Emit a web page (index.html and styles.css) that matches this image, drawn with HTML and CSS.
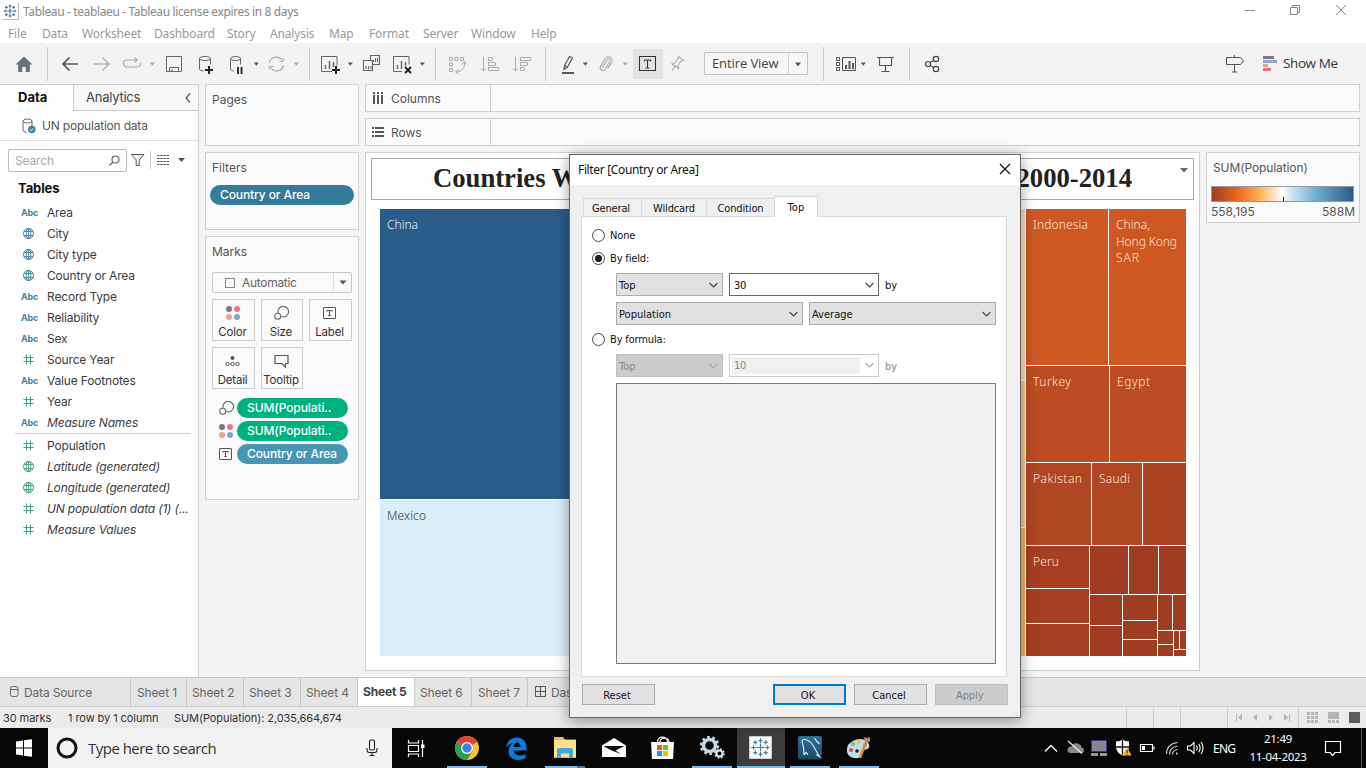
FILE: index.html
```html
<!DOCTYPE html>
<html lang="en">
<head>
<meta charset="utf-8">
<title>Tableau - teablaeu</title>
<link rel="stylesheet" href="styles.css">
</head>
<body>
<svg class="defs" width="0" height="0">
  <defs>
    <g id="globe" fill="none" stroke="currentColor"><circle cx="5.5" cy="5.5" r="5"/><ellipse cx="5.5" cy="5.5" rx="2.3" ry="5"/><path d="M5.5 0v11M1 3.5h9M1 7.5h9" stroke-width=".9"/></g>
    <g id="hash" fill="none" stroke="currentColor"><path d="M3.5 .5v10M7.5 .5v10M.5 3.5h10M.5 7.5h10"/></g>
    <g id="size" fill="none" stroke="#666" stroke-width="1.1"><path d="M4.2 7.2A5.3 5.3 0 1 1 7.3 10.6"/><circle cx="3.7" cy="10.3" r="3"/></g>
    <g id="dots"><circle cx="3" cy="3" r="3" fill="#85708f"/><circle cx="11" cy="3" r="3" fill="#ef7384"/><circle cx="3" cy="11" r="3" fill="#eda583"/><circle cx="11" cy="11" r="3" fill="#86a3c8"/></g>
    <g id="tbox" fill="none" stroke="#555"><rect x=".5" y=".5" width="12" height="11" rx=".5"/><path d="M4 4.500v-1h5v1M6.500 3.500v5M5.200 8.500h2.600" stroke-width="1.1"/></g>
    <g id="spark" stroke="#477f9c" fill="none"><path d="M0-3.500v7M-3.500 0h7M0-8v4M-1.700-6h3.400M0 4v4M-1.700 6h3.400M-8 0h4M-6-1.700v3.400M4 0h4M6-1.700v3.400M-4.500-6.300v3.600M-6.300-4.500h3.600M4.500-6.300v3.600M2.700-4.500h3.600M-4.500 2.700v3.600M-6.300 4.500h3.600M4.500 2.700v3.600M2.700 4.500h3.600"/></g>
    <path id="caret" d="M.3 0h5L2.800 3.200z"/>
    <linearGradient id="board" x1="0" y1="0" x2="0" y2="1"><stop stop-color="#2f7099"/><stop offset="1" stop-color="#1d4868"/></linearGradient>
  </defs>
</svg>

<header class="titlebar">
  <svg class="app" width="16" height="17" viewBox="0 0 16 17"><path d="M0 16.500h15.500V0" fill="none" stroke="#bbb"/><use href="#spark" transform="translate(7 8) scale(.8)" stroke-width="1.500"/></svg>
  <span class="title">Tableau - teablaeu - Tableau license expires in 8 days</span>
  <svg class="wincontrols" width="110" height="23" viewBox="1240 0 110 23" fill="none" stroke="#888"><path d="M1245 10.500h10M1290.500 7.500h7v7h-7zM1292.500 7.500v-2h7v7h-2M1336 5l10 10M1346 5l-10 10"/></svg>
</header>
<nav class="menubar">
  <span class="m1">File</span><span class="m2">Data</span><span class="m3">Worksheet</span><span class="m4">Dashboard</span><span class="m5">Story</span><span class="m6">Analysis</span><span class="m7">Map</span><span class="m8">Format</span><span class="m9">Server</span><span class="m10">Window</span><span class="m11">Help</span>
</nav>

<div class="toolbar">
  <svg width="704" height="41" viewBox="0 43 704 41" fill="none" stroke="#666">
    <path d="M24 56.500l-8.500 8h2.700v7.500h4v-5h3.600v5h4v-7.500h2.700z" fill="#667282" stroke="none"/>
    <path d="M47.500 47v34M309.500 47v34M435.500 47v34M545.500 47v34" stroke="#ccc"/>
    <path d="M63 64h15M69.500 57.500L63 64l6.500 6.500" stroke="#555" stroke-width="1.700"/>
    <path d="M94 64h15M102.500 57.500L109 64l-6.500 6.500" stroke="#b4b4b4" stroke-width="1.500"/>
    <path d="M133 67h-6a3.500 3.500 0 0 1 0-7h10M134.500 57.500l2.700 2.500-2.700 2.500M137 67a3.500 3.500 0 0 0 3.500-4.500M133 67h4" stroke="#aaa" stroke-width="1.200"/>
    <path d="M166.500 56.500h15v15h-15zM169.500 71.500v-4h9v4M172 69v2.500"/>
    <ellipse cx="205" cy="58.500" rx="5.500" ry="2"/><path d="M199.500 58.500v10.500c0 1.200 2 1.800 4 2M210.500 58.500v6"/>
    <path d="M209 66v8M205 70h8" stroke="#222" stroke-width="2"/>
    <ellipse cx="235.500" cy="58.500" rx="5" ry="2"/><path d="M230.500 58.500v10.500c0 1 1.500 1.800 3.500 2M240.500 58.500v6"/>
    <path d="M238 67v7M241.500 67v7" stroke="#222" stroke-width="1.800"/>
    <path d="M269.500 62.500a7 7 0 0 1 12.500-2.500M283.500 65.500a7 7 0 0 1-12.500 2.500M279.500 61.500l3 0 1.500-3M273.500 66.500l-3.500 0-1 3" stroke="#aaa" stroke-width="1.200"/>
    <path d="M332 71.500h-10.500v-15h15.500v9" /><path d="M325.500 69v-4M329.500 69v-8M333.500 67v-5" stroke-width="1.500"/><path d="M336 66v8M332 70h8" stroke="#222" stroke-width="2"/>
    <path d="M370.500 60.500v-5h9v9h-7M363.500 60.500h9v10h-9zM366 69v-3M368.500 69v-3M371 69v-3M373.500 62v-2M375.500 62v-4M377.500 62v-4" stroke-width="1.100"/>
    <path d="M402 71.500h-8.500v-15h15.500v8"/><path d="M397.500 69v-4M401.500 69v-8M405.500 66v-4" stroke-width="1.500"/><path d="M405 67l6 6M411 67l-6 6" stroke="#222" stroke-width="2"/>
    <g stroke="#aaa"><path d="M449.500 57.500h3v3h-3zM455 57.500h3v3h-3zM460.500 57.500h3v3h-3zM449.500 63h3v3h-3zM449.500 68.500h3v3h-3zM464.500 62v2q0 7-8 8M461.500 64.500l3-3 2.500 3M458.500 69.500l-3 2.500 3 2"/>
    <path d="M483.500 57v14M481 68.500l2.500 2.500 2.500-2.500M488.500 57.500h4v3h-4zM488.500 62.500h7v3h-7zM488.500 67.500h10v3h-10z"/>
    <path d="M515.500 57v14M513 68.500l2.500 2.500 2.500-2.500M520.500 57.500h10v3h-10zM520.500 62.500h7v3h-7zM520.500 67.500h4v3h-4z"/></g>
    <path d="M562 73h12" stroke="#555" stroke-width="2"/><path d="M564.500 65.500l5-9 3 1.500-5 9-3.500 2.500zM564.500 65.500l3 1.500" stroke="#555" stroke-width="1.200"/>
    <path d="M602.500 67.500l5-8a1.500 1.500 0 0 1 2.500 1.700l-5 8a2.600 2.600 0 0 1-4.500-2.800l5-8a3.600 3.600 0 0 1 6 4.200l-4 6" stroke="#aaa" stroke-width="1.100"/>
    <path d="M633 49h30v30h-30z" fill="#e3e3e3" stroke="none"/><path d="M639.500 56.500h16v14h-16zM644.500 61.500v-1.500h6v1.500M647.500 60v8M645.500 68h4" stroke="#333" stroke-width="1.100"/>
    <path d="M678.500 56.500l5 4-3 1-2.500 4 .5 3-3-2.500-3.500 4.500M671.500 63.500l4 3M671.500 63.500l3.500-.5 2.500-3.500 1-3" stroke="#aaa" stroke-width="1.100"/>
    <g fill="#555" stroke="none"><use href="#caret" x="253.500" y="62.500"/><use href="#caret" x="347.500" y="62.500"/><use href="#caret" x="419.500" y="62.500"/><use href="#caret" x="582.500" y="62.500"/></g>
    <g fill="#aaa" stroke="none"><use href="#caret" x="149.500" y="62.500"/><use href="#caret" x="293.500" y="62.500"/><use href="#caret" x="622.500" y="62.500"/></g>
  </svg>
  <div class="viewsize"><span>Entire View</span><svg width="18" height="22"><path d="M6 9.500h6l-3 4z" fill="#555"/></svg></div>
  <svg width="475" height="41" viewBox="808 43 475 41" fill="none" stroke="#555">
    <path d="M823.500 47v34M909.500 47v34" stroke="#ccc"/>
    <path d="M836.500 57.500h3v3h-3zM836.500 62.500h3v3h-3zM836.500 67.500h3v3h-3zM842.500 57.500h13v13h-13z"/><path d="M846 69v-4M849.500 69v-8M853 69v-6" stroke-width="2"/>
    <use href="#caret" x="860.500" y="62.500" fill="#555" stroke="none"/>
    <path d="M877 57.500h17M879.500 57.500v8h12v-8M885.500 65.500v5.500M881.500 71.500h8" stroke-width="1.200"/>
    <g stroke="#444" stroke-width="1.200"><circle cx="928" cy="64" r="2.500"/><circle cx="936" cy="59" r="2.700"/><circle cx="936" cy="69" r="2.700"/><path d="M930.500 62.500l3-2M930.500 65.500l3 2"/></g>
    <path d="M1226.500 57.500h14l3 3.500-3 3.500h-14zM1234.500 55v2M1234.500 64.500v7.500M1232 72h5"/>
    <g stroke="none"><path d="M1263 56h11v3h-11z" fill="#85708f"/><path d="M1263 60h14v3h-14z" fill="#8aa9cd"/><path d="M1263 64h5v3h-5z" fill="#eda583"/><path d="M1263 68h8v3h-8z" fill="#e5737e"/></g>
  </svg>
  <span class="showme">Show Me</span>
</div>

<main class="workspace">
  <aside class="datapane">
    <div class="panetabs">
      <b class="ptab on">Data</b>
      <div class="ptab off"><span>Analytics</span><svg width="8" height="12"><path d="M6 1.500L2 6l4 4.500" fill="none" stroke="#555" stroke-width="1.200"/></svg></div>
    </div>
    <div class="source"><svg width="14" height="16" fill="none" stroke="#666"><ellipse cx="5.500" cy="3" rx="4.500" ry="2"/><path d="M1 3v9c0 1.500 1.500 2 3.500 2.300M10 3v5"/><circle cx="9.800" cy="11.500" r="3.800" fill="#4484a0" stroke="none"/><path d="M8 11.500l1.200 1.200 2-2.200" stroke="#fff"/></svg><span>UN population data</span></div>
    <div class="searchrow">
      <div class="search"><span>Search</span><svg width="11" height="11" fill="none" stroke="#666" stroke-width="1.200"><circle cx="6.500" cy="4.500" r="3.500"/><path d="M4 7L.5 10.500"/></svg></div>
      <svg class="tools" width="60" height="18" viewBox="130 151 60 18"><path d="M131.500 154.500h12.500l-4.800 5.500v5.500h-3v-5.500z" fill="none" stroke="#555"/><path d="M150.500 151v18" stroke="#ccc"/><path d="M157 155.500h12M157 158.500h12M157 161.500h12M157 164.500h12" stroke="#555" stroke-dasharray="2.500 .7"/><path d="M178 158h7l-3.500 4z" fill="#555"/></svg>
    </div>
    <h2>Tables</h2>
    <ul class="fields dims">
      <li><i class="abc">Abc</i>Area</li>
      <li><svg><use href="#globe"/></svg>City</li>
      <li><svg><use href="#globe"/></svg>City type</li>
      <li><svg><use href="#globe"/></svg>Country or Area</li>
      <li><i class="abc">Abc</i>Record Type</li>
      <li><i class="abc">Abc</i>Reliability</li>
      <li><i class="abc">Abc</i>Sex</li>
      <li><svg class="green"><use href="#hash"/></svg>Source Year</li>
      <li><i class="abc">Abc</i>Value Footnotes</li>
      <li><svg class="green"><use href="#hash"/></svg>Year</li>
      <li class="it"><i class="abc">Abc</i>Measure Names</li>
    </ul>
    <ul class="fields measures">
      <li><svg class="green"><use href="#hash"/></svg>Population</li>
      <li class="it"><svg class="green"><use href="#globe"/></svg>Latitude (generated)</li>
      <li class="it"><svg class="green"><use href="#globe"/></svg>Longitude (generated)</li>
      <li class="it"><svg class="green"><use href="#hash"/></svg>UN population data (1) (...</li>
      <li class="it"><svg class="green"><use href="#hash"/></svg>Measure Values</li>
    </ul>
  </aside>

  <section class="cards">
    <div class="card pages"><h3>Pages</h3></div>
    <div class="card filters"><h3>Filters</h3><div class="pill teal">Country or Area</div></div>
    <div class="card marks">
      <h3>Marks</h3>
      <div class="marktype"><svg width="10" height="10"><rect x=".5" y=".5" width="9" height="9" fill="none" stroke="#888"/></svg><span>Automatic</span><svg class="drop" width="18" height="19"><path d="M5.500 7.500h7L9 11.500z" fill="#555"/></svg></div>
      <div class="markgrid">
        <div><svg width="14" height="14"><use href="#dots"/></svg>Color</div>
        <div><svg width="15" height="14"><use href="#size"/></svg>Size</div>
        <div><svg width="13" height="14"><use href="#tbox" y="1"/></svg>Label</div>
        <div><svg width="15" height="14" fill="none" stroke="#555"><circle cx="7.500" cy="4" r="2" fill="#555" stroke="none"/><circle cx="2.500" cy="10" r="1.700"/><circle cx="7.500" cy="10" r="1.700"/><circle cx="12.500" cy="10" r="1.700"/></svg>Detail</div>
        <div><svg width="15" height="14"><path d="M1 1.500h13v8h-2.500v3.500l-3.500-3.500h-7z" fill="none" stroke="#555" stroke-width="1.200"/></svg>Tooltip</div>
      </div>
      <div class="encodings">
        <div><svg width="15" height="14"><use href="#size"/></svg><span class="pill green">SUM(Populati..</span></div>
        <div><svg width="15" height="14"><use href="#dots"/></svg><span class="pill green">SUM(Populati..</span></div>
        <div><svg width="15" height="14"><use href="#tbox" y="1"/></svg><span class="pill blue">Country or Area</span></div>
      </div>
    </div>
  </section>

  <section class="canvas">
    <div class="shelf"><div class="label"><svg width="13" height="13" fill="#555"><path d="M1 0h2v2h-2zM5 0h2v2h-2zM9 0h2v2h-2zM1 3h2v9h-2zM5 3h2v9h-2zM9 3h2v9h-2z"/></svg>Columns</div></div>
    <div class="shelf"><div class="label"><svg width="13" height="13" fill="#555"><path d="M0 1h2v2h-2zM0 5h2v2h-2zM0 9h2v2h-2zM3 1h9v2h-9zM3 5h9v2h-9zM3 9h9v2h-9z"/></svg>Rows</div></div>
    <div class="lower">
      <div class="viz">
        <div class="viztitle"><span>Countries W</span><span>2000-2014</span><svg width="9" height="5"><path d="M0 0h8L4 4.500z" fill="#666"/></svg></div>
        <svg class="treemap" width="806" height="447" viewBox="380 209 806 447">
          <path d="M380 209h420v290h-420z" fill="#2a5b89"/><path d="M380 500h420v156h-420z" fill="#daeefa"/>
          <path d="M1000 209h25v171h-25z" fill="#f8e2cb"/><path d="M1000 381h25v146h-25z" fill="#f8cd92"/><path d="M1000 528h25v128h-25z" fill="#fbb45c"/>
          <path d="M1026 209h82v156h-82zM1109 209h77v156h-77z" fill="#cf5822"/>
          <path d="M1026 366h83v96h-83zM1110 366h76v96h-76z" fill="#bc4c22"/>
          <path d="M1026 463h65v82h-65zM1092 463h50v82h-50z" fill="#b04622"/><path d="M1143 463h43v82h-43z" fill="#ab4322"/>
          <path d="M1026 546h63v42h-63zM1026 589h63v34h-63zM1026 624h63v32h-63z" fill="#a53f22"/>
          <path d="M1090 546h38v48h-38zM1129 546h29v48h-29zM1159 546h27v48h-27zM1090 595h32v30h-32zM1090 626h32v30h-32zM1123 595h34v25h-34zM1123 621h34v18h-34zM1123 640h34v16h-34zM1158 595h14v35h-14zM1173 595h13v35h-13zM1158 631h15v13h-15zM1158 645h15v11h-15zM1174 631h5v18h-5zM1180 631h6v18h-6zM1174 650h12v6h-12z" fill="#a03c22"/>
          <g fill="#e6f0f7"><text x="387" y="229" textLength="31">China</text></g>
          <g fill="#333"><text x="387" y="520" textLength="39">Mexico</text></g>
          <g fill="#fbe3d5">
            <text x="1033" y="229" textLength="55">Indonesia</text><text x="1116" y="229" textLength="34">China,</text><text x="1116" y="246" textLength="61">Hong Kong</text><text x="1116" y="262" textLength="23">SAR</text>
            <text x="1033" y="386" textLength="38">Turkey</text><text x="1117" y="386" textLength="33">Egypt</text><text x="1033" y="483" textLength="49">Pakistan</text><text x="1099" y="483" textLength="31">Saudi</text><text x="1033" y="566" textLength="26">Peru</text>
          </g>
        </svg>
      </div>
      <div class="card legend"><h3>SUM(Population)</h3><div class="ramp"></div><div class="range"><span>558,195</span><span>588M</span></div></div>
    </div>
  </section>
</main>

<div class="sheettabs">
  <span class="ds"><svg width="9" height="12" fill="none" stroke="#666"><rect x=".5" y=".5" width="7.500" height="10" rx="2"/><path d="M.5 3.500h7.500"/></svg>Data Source</span>
  <span>Sheet 1</span><span class="w7">Sheet 2</span><span class="w7">Sheet 3</span><span class="w7">Sheet 4</span><b class="w7">Sheet 5</b><span class="w7">Sheet 6</span><span>Sheet 7</span>
  <span class="dash"><svg width="11" height="11" fill="none" stroke="#555"><path d="M.5 .5h10v10h-10zM5.500 .5v10M.5 5.500h10"/></svg>Das</span>
</div>
<div class="status">
  <span class="s1">30 marks</span><span class="s2">1 row by 1 column</span><span class="s3">SUM(Population): 2,035,664,674</span>
  <svg width="246" height="21" viewBox="1120 707 246 21"><path d="M1126.500 708v20M1153.500 708v20M1180.500 708v20M1227.500 708v20M1298.500 708v20" stroke="#ccc"/><g fill="#b4b4b4"><path d="M1236 714h1v7h-1zM1242 714v7l-4-3.500zM1257 714v7l-4-3.500zM1269 714v7l4-3.500zM1284 714v7l4-3.500zM1289 714h1v7h-1z"/><path d="M1307 712h3v3h-3zM1311 712h3v3h-3zM1315 712h3v3h-3zM1307 716h3v3h-3zM1311 716h3v3h-3zM1315 716h3v3h-3zM1307 720h3v3h-3zM1311 720h3v3h-3zM1315 720h3v3h-3zM1328 712h11v7h-11zM1328 720h3v3h-3zM1332 720h3v3h-3zM1336 720h3v3h-3z"/></g><path d="M1349 712h11v11h-11z" fill="#5c5c5c"/></svg>
</div>

<footer class="taskbar">
  <svg width="48" height="40" viewBox="0 728 48 40"><path d="M16 741.500l7-1v7h-7zM24 740.300l8-1.100v8.300h-8zM16 748.500h7v7l-7-1zM24 748.500h8v8.300l-8-1.100z" fill="#fff"/></svg>
  <div class="tasksearch"><svg width="22" height="22"><circle cx="11" cy="11" r="9" fill="none" stroke="#111" stroke-width="3"/></svg><span>Type here to search</span><svg width="14" height="18" fill="none" stroke="#222" stroke-width="1.100"><rect x="4.500" y="1" width="5" height="10" rx="1.500"/><path d="M2 9v2q0 2.500 2.500 2.500h5q2.500 0 2.500-2.500V9M7 13.500v3M4.500 16.500h5"/></svg></div>
  <svg width="848" height="40" viewBox="392 728 848 40">
    <g fill="none" stroke="#fff" stroke-width="1.200"><path d="M408.500 740v3h10v-3M408.500 757v-3h10v3M408.500 745.500h10v6h-10zM422.500 740v17"/><path d="M421 744.500h3.500v3.500h-3.500z" fill="#fff" stroke="none"/></g>
    <circle cx="467" cy="748" r="12" fill="#f6c52b"/><path d="M467 748L456.600 742A12 12 0 0 1 477.400 742z" fill="#de4335"/><path d="M456.600 742A12 12 0 0 0 467 760l5.500-9-5.500-3z" fill="#2c9f50"/><circle cx="467" cy="748" r="5.900" fill="#fff"/><circle cx="467" cy="748" r="4.700" fill="#3f7fe8"/>
    <path d="M506 747.500C507 741 511 737.500 516.500 737.500C523 737.500 526.500 742 526.500 747V750.500H513.500C514 754 517 755.500 520 755.500Q523 755.500 525.500 754V758Q522.500 760 518 760C512 760 508.500 756 508.500 751Q508.500 745.500 513.500 743Q509 743.500 506 747.500zM513.500 747H520.500C520.500 744 519 742.500 517 742.500C515 742.500 513.800 744.500 513.500 747z" fill="#0a7bdc"/>
    <path d="M554 737h9l2 2.500h11V758h-22z" fill="#e9bd59"/><path d="M554 740h22v17h-22z" fill="#fbe08e"/><path d="M557 750q0-2 2-2h12q2 0 2 2v8h-4v-4.500h-8v4.500h-4z" fill="#43a9dc"/>
    <path d="M602 745.500L614 738l12 7.500V757h-24z" fill="#fff"/><path d="M603.500 746h21L615.500 750.500l5.500 3.500-10.500-4z" fill="#0a0a0a"/>
    <path d="M651 742h23l-1 17h-21z" fill="#fff"/><path d="M657.500 742c0-6.500 10-6.500 10 0M660 742c0-5 9-5 9 0" fill="none" stroke="#fff" stroke-width="1.200"/><path d="M657 745h5v5h-5z" fill="#f05022"/><path d="M663 745h5v5h-5z" fill="#7eba00"/><path d="M657 751h5v5h-5z" fill="#00a2ed"/><path d="M663 751h5v5h-5z" fill="#ffb901"/>
    <circle cx="709.500" cy="745.500" r="6" fill="none" stroke="#c4d9e7" stroke-width="3.500"/><circle cx="709.500" cy="745.500" r="8.500" fill="none" stroke="#c4d9e7" stroke-width="2.500" stroke-dasharray="2.700 2.640"/><circle cx="719.500" cy="753.500" r="3" fill="none" stroke="#dbe8f0" stroke-width="2"/><circle cx="719.500" cy="753.500" r="4.500" fill="none" stroke="#dbe8f0" stroke-width="1.500" stroke-dasharray="1.800 1.730"/>
    <path d="M737 728h48v40h-48z" fill="#3c3c3c"/><path d="M749.500 736.500h22v22h-22z" fill="#f6f8f9" stroke="#ccc"/><use href="#spark" transform="translate(760.500 747.500) scale(1.150)"/>
    <rect x="798" y="736" width="24" height="23.500" rx="2" fill="url(#board)"/><path d="M804 755l-.5-8-1.500-5q0-3 3-2.500 5 1 8 6t6.500 11l-3.500-2M804 755l2-2.500 2 2M814.500 738l2 3 3 3" fill="none" stroke="#dce8ef" stroke-width="1.200"/>
    <path d="M847 752q-1-9 8-12t14 4q2 5-5 6-4 1-3 4t-3 4q-9 1-11-6z" fill="#c2dbe7"/><circle cx="851" cy="750" r="2" fill="#dc5044"/><circle cx="853" cy="744" r="2" fill="#86bb5a"/><circle cx="859" cy="742" r="2" fill="#e8c94f"/><circle cx="865" cy="745" r="2" fill="#4b9ad0"/><circle cx="857" cy="751" r="1.800" fill="#222"/><path d="M867 740l-7 18" stroke="#d98a3a" stroke-width="2.500"/><path d="M864 737l3 1 3-1v4l-3 3-2-2z" fill="#b88a60"/>
    <path d="M447 766h40v2h-40zM545 766h32v2h-32zM692 766h40v2h-40zM737 766h48v2h-48zM790 766h40v2h-40zM839 766h40v2h-40z" fill="#76b9ed"/><path d="M577 766h8v2h-8z" fill="#4d7898"/>
    <path d="M1045 751.500l6-6 6 6" fill="none" stroke="#fff" stroke-width="1.300"/>
    <path d="M1070 753q-3-1-2.500-4 1-3 4-2.500 2-4 6-3t4 4q3 1 2.500 3.500t-3 2z" fill="#888"/><path d="M1068 741l14 12.500" stroke="#eee" stroke-width="1.300"/>
    <path d="M1091.500 740.500h15v11h-15z" fill="#858595" stroke="#3a3a7c"/><path d="M1091 753h7v3h-7zM1100 753h7v3h-7z" fill="#9393a8"/>
    <path d="M1116 741.500q4 0 6.500-2 2.500 2 6.500 2v5q0 6-6.500 9-6.500-3-6.500-9z" fill="#fff"/><path d="M1122.500 740v15M1116 747h13" stroke="#111" stroke-width="1.300"/><path d="M1127 747l4.500 8.500h-9.500z" fill="#f7bf22"/><path d="M1127 750v3M1127 753.700v1" stroke="#111"/>
    <path d="M1140.500 744.500h12v7h-12zM1154 746.500v3" fill="none" stroke="#fff" stroke-width="1.200"/><path d="M1142 746h3v4h-3z" fill="#fff"/>
    <g fill="none" stroke="#ccc" stroke-width="1.200"><path d="M1166.500 754q0-10 11-11.500M1169.500 754.500q0-7 8-8.500M1172.500 754.500q0-4 5-5"/><path d="M1176 753.500h1.500" stroke-width="2"/></g>
    <path d="M1187.500 746h3l3.500-3.500v11l-3.500-3.500h-3zM1196.500 745.500q1.500 2.500 0 5M1198.800 743.700q2.600 4.300 0 8.600M1201 742q4 6 0 12" fill="none" stroke="#fff" stroke-width="1.100"/>
    <text class="lang" x="1213" y="752.500" textLength="23">ENG</text>
  </svg>
  <div class="clock"><span class="time">21:49</span><span class="date">11-04-2023</span></div>
  <svg class="notif" width="48" height="40" viewBox="1318 728 48 40" fill="none"><path d="M1325.500 741.500h15v11h-5.500l-2.500 3-2.500-3h-4.500z" stroke="#fff" stroke-width="1.200"/><path d="M1361.500 728v40" stroke="#555"/></svg>
</footer>

<div class="dialog" role="dialog">
  <div class="dtitle"><span>Filter [Country or Area]</span><svg width="12" height="12"><path d="M1 1l10 10M11 1L1 11" stroke="#111" stroke-width="1.200"/></svg></div>
  <div class="dtabs"><span class="t1">General</span><span class="t2">Wildcard</span><span class="t3">Condition</span><span class="t4">Top</span></div>
  <div class="dpane">
    <div class="radio r1"><i></i>None</div>
    <div class="radio r2"><i class="on"></i>By field:</div>
    <div class="drow"><div class="combo c107">Top<svg><use href="#chev"/></svg></div><div class="combo edit">30<svg><use href="#chev"/></svg></div><span class="by">by</span></div>
    <div class="drow two"><div class="combo c187">Population<svg><use href="#chev"/></svg></div><div class="combo c187">Average<svg><use href="#chev"/></svg></div></div>
    <div class="radio r3"><i></i>By formula:</div>
    <div class="drow off"><div class="combo c107">Top<svg><use href="#chev"/></svg></div><div class="combo edit"><em>10</em><svg><use href="#chev"/></svg></div><span class="by">by</span></div>
    <div class="formula"></div>
  </div>
  <div class="dbuttons"><button class="reset">Reset</button><button class="ok">OK</button><button>Cancel</button><button class="apply">Apply</button></div>
  <svg class="defs" width="0" height="0"><defs><path id="chev" d="M.5 1l4 4 4-4" fill="none" stroke="currentColor" stroke-width="1.100"/></defs></svg>
</div>
</body>
</html>
```
FILE: styles.css
```css
* { box-sizing: border-box; }
body { margin: 0; width: 1366px; height: 768px; overflow: hidden; display: flex; flex-direction: column; background: #f4f4f4; color: #333; font: 12px "Inter", "Open Sans", sans-serif; white-space: nowrap; position: relative; }
svg { display: block; flex: none; }
h2, h3, ul { margin: 0; padding: 0; font-weight: 400; }
.defs { position: absolute; }

.titlebar { height: 23px; background: #fff; display: flex; align-items: center; padding-left: 3px; font: 12px "Noto Sans", sans-serif; color: #888; flex: none; }
.titlebar .title { margin-left: 4px; letter-spacing: -.37px; }
.wincontrols { margin-left: auto; margin-right: 16px; }
.menubar { height: 20px; background: #fff; display: flex; font: 12px/21px "Noto Sans", sans-serif; color: #999; padding-left: 8px; flex: none; letter-spacing: -.15px; }
.menubar span { flex: none; }
.m1 { width: 34px; } .m2 { width: 40px; } .m3 { width: 72px; } .m4 { width: 73px; } .m5 { width: 43px; } .m6 { width: 59px; } .m7 { width: 40px; } .m8 { width: 54px; } .m9 { width: 48px; } .m10 { width: 60px; }

.toolbar { height: 41px; background: #f3f3f3; display: flex; flex: none; }
.viewsize { width: 104px; height: 23px; margin-top: 9px; border: 1px solid #c4c4c4; border-radius: 2px; background: #f6f6f6; display: flex; color: #444; font: 13px/21px "Open Sans", sans-serif; }
.viewsize span { width: 85px; padding-left: 7px; border-right: 1px solid #d4d4d4; letter-spacing: -.1px; }
.showme { font: 13.500px/40px "Open Sans", sans-serif; color: #333; letter-spacing: -.4px; }

.workspace { flex: none; height: 593px; display: flex; }
.datapane { width: 199px; background: #fff; border-right: 1px solid #ccc; border-top: 1px solid #ccc; flex: none; color: #3c3c3c; }
.panetabs { height: 26px; display: flex; font-size: 13px; line-height: 25px; }
.ptab.on { width: 73px; padding-left: 18px; color: #111; font-size: 13px; }
.ptab.off { flex: 1; display: flex; justify-content: space-between; align-items: center; padding: 0 6px 0 12px; background: #f8f8f8; border-left: 1px solid #ccc; border-bottom: 1px solid #ccc; color: #444; letter-spacing: -.25px; }
.source { height: 30px; display: flex; align-items: center; gap: 6px; padding-left: 22px; color: #555; border-bottom: 1px solid #ddd; letter-spacing: -.2px; }
.searchrow { display: flex; padding: 8px 0 0 8px; height: 31px; }
.search { width: 119px; height: 23px; border: 1px solid #bbb; border-radius: 2px; display: flex; align-items: center; justify-content: space-between; padding: 0 6px; color: #aaa; letter-spacing: -.15px; }
.tools { margin: 2px 0 0 3px; }
h2 { font-size: 13px; font-weight: 700; color: #111; line-height: 22px; margin: 5px 0 2px 18px; letter-spacing: -.1px; }
.fields { list-style: none; }
.fields li { height: 21px; display: flex; align-items: center; padding-left: 23px; padding-top: 1px; letter-spacing: -.17px; }
.fields li svg { width: 11px; height: 11px; margin-right: 13px; color: #44829d; }
.fields li svg.green { color: #45a082; }
.fields .it { font-style: italic; }
.abc { width: 26px; margin-left: -2px; font: bold 9px "Inter", sans-serif; color: #44829d; }
.measures { border-top: 1px solid #ccc; margin: 1px 7px 0 15px; }
.measures li { padding-left: 8px; }

.cards { width: 154px; margin-left: 6px; flex: none; display: flex; flex-direction: column; gap: 6px; }
.card { background: #fafafa; border: 1px solid #d0d0d0; color: #555; }
.card h3 { font-size: 12px; line-height: 30px; padding-left: 6px; }
.pages { height: 62px; }
.filters { height: 78px; }
.marks { height: 264px; }
.pill { display: block; height: 20px; border-radius: 10px; color: #fff; font: 500 12px/20px "Inter", sans-serif; letter-spacing: -.1px; padding-left: 10px; }
.teal { background: #357c9b; margin: 2px 4px 0; }
.marktype { margin: 5px 6px 0; width: 140px; height: 21px; border: 1px solid #c8c8c8; border-radius: 2px; display: flex; align-items: center; color: #666; padding-left: 12px; letter-spacing: -.3px; }
.marktype span { margin-left: 7px; }
.marktype .drop { margin-left: auto; border-left: 1px solid #ddd; }
.markgrid { display: grid; grid-template-columns: 43px 42px 43px; grid-auto-rows: 42px; gap: 6px; margin: 6px 0 0 6px; color: #333; font-size: 11.500px; }
.markgrid div { border: 1px solid #ccc; display: flex; flex-direction: column; align-items: center; padding: 6px 2px 0 0; gap: 5px; line-height: 15px; letter-spacing: -.2px; }
.encodings { margin: 9px 0 0 13px; display: flex; flex-direction: column; gap: 3px; }
.encodings div { display: flex; align-items: center; gap: 3px; }
.encodings .pill { width: 111px; }
.pill.green { background: #00b180; }
.pill.blue { background: #4996b2; }

.canvas { width: 995px; margin-left: 6px; flex: none; }
.shelf { height: 28px; margin-bottom: 6px; border: 1px solid #d0d0d0; background: #fafafa; color: #555; }
.shelf .label { width: 125px; height: 26px; border-right: 1px solid #d0d0d0; display: flex; align-items: center; gap: 6px; padding-left: 6px; }
.lower { display: flex; gap: 6px; align-items: flex-start; }
.viz { width: 835px; height: 519px; background: #fff; border: 1px solid #d0d0d0; padding: 5px; }
.viztitle { height: 42px; width: 823px; border: 1px solid #aaa; display: flex; justify-content: space-between; font: bold 26.670px/39px "Liberation Serif", serif; color: #222; padding: 0 61px; position: relative; }
.viztitle svg { position: absolute; right: 4px; top: 9px; }
.treemap { margin: 9px 0 0 9px; font: 300 12px "Noto Sans", sans-serif; }
.legend { width: 154px; height: 71px; padding: 0 5px 0 4px; }
.legend h3 { padding-left: 2px; letter-spacing: -.1px; }
.ramp { height: 16px; margin-top: 3px; border: 1px solid #999; background: linear-gradient(#111, #111) 71px 100% / 1px 4px no-repeat, linear-gradient(90deg, #a03c22, #e9671f 18%, #fbb357 34%, #fde5cf 45%, #fff 50%, #d5ecf8 55%, #74afd3 73%, #2a5b89); }
.range { display: flex; justify-content: space-between; line-height: 20px; margin-right: -1px; }

.sheettabs { height: 30px; flex: none; background: #e5e5e5; border-top: 1px solid #c8c8c8; border-bottom: 1px solid #ccc; display: flex; color: #666; line-height: 29px; }
.sheettabs > * { width: 56px; border-right: 1px solid #c8c8c8; padding-left: 6px; letter-spacing: -.15px; }
.sheettabs .ds { width: 131px; display: flex; align-items: flex-start; gap: 5px; padding-left: 10px; }
.sheettabs .ds svg { margin-top: 8px; }
.sheettabs .w7 { width: 57px; padding-left: 5px; }
.sheettabs b { background: #fff; color: #444; line-height: 28px; }
.sheettabs .dash { width: 120px; display: flex; gap: 5px; padding-left: 7px; }
.sheettabs .dash svg { margin-top: 8px; }
.status { height: 21px; flex: none; background: #ebebeb; display: flex; font-size: 11px; line-height: 22px; color: #333; padding-left: 3px; letter-spacing: -.07px; }
.s1 { width: 65px; } .s2 { width: 106px; }
.status svg { margin-left: auto; }

.taskbar { height: 40px; flex: none; background: #070707; display: flex; color: #fff; }
.tasksearch { width: 344px; background: #f2f2f2; color: #333; display: flex; align-items: center; padding: 0 13px 0 8px; font: 15px "Open Sans", sans-serif; }
.tasksearch span { margin: 0 auto 0 10px; letter-spacing: -.52px; }
.lang { fill: #fff; font: 12px "Noto Sans", sans-serif; }
.clock { width: 76px; display: flex; flex-direction: column; align-items: center; font: 11.500px/18px "Noto Sans", sans-serif; padding-top: 2px; letter-spacing: -.3px; }
.notif { margin-left: auto; }

.dialog { position: absolute; left: 569px; top: 154px; width: 452px; height: 564px; border: 1px solid #666; background: #f0f0f0; box-shadow: 0 3px 14px rgba(0,0,0,.4); color: #111; font: 11px "DejaVu Sans Condensed", "DejaVu Sans", sans-serif; }
.dtitle { height: 30px; background: #fff; display: flex; align-items: center; justify-content: space-between; padding: 0 9px 2px 8px; font: 12px "Noto Sans", sans-serif; letter-spacing: -.35px; }
.dtabs { height: 31px; display: flex; align-items: flex-end; padding-left: 13px; }
.dtabs span { height: 18px; border: 1px solid #d9d9d9; border-bottom: 0; border-right: 0; text-align: center; line-height: 19px; letter-spacing: -.15px; }
.dtabs .t1 { width: 58px; padding-right: 3px; } .dtabs .t2 { width: 65px; } .dtabs .t3 { width: 68px; }
.dtabs .t4 { width: 44px; height: 21px; border-right: 1px solid #d9d9d9; background: #fff; margin-bottom: -1px; line-height: 21px; position: relative; letter-spacing: .2px; }
.dpane { width: 426px; height: 461px; margin-left: 11px; background: #fff; border: 1px solid #d9d9d9; padding-left: 10px; }
.radio { height: 14px; display: flex; align-items: center; gap: 5px; letter-spacing: -.15px; }
.radio i { width: 13px; height: 13px; border: 1px solid #444; border-radius: 50%; }
.radio i.on { background: radial-gradient(#222 0 3.300px, #fff 4px); }
.r1 { margin-top: 11px; } .r2 { margin-top: 9px; } .r3 { margin-top: 8px; }
.drow { display: flex; gap: 6px; margin: 8px 0 0 24px; align-items: center; }
.drow.two { margin-top: 6px; }
.drow.off { margin-top: 7px; }
.by { padding-top: 2px; }
.r3 { margin-top: 7px; }
.drow.off { margin-top: 8px; }
.combo { height: 23px; border: 1px solid #acacac; background: #e1e1e1; display: flex; align-items: center; justify-content: space-between; padding: 1px 4px 0 2px; color: #111; }
.combo svg { width: 9px; height: 7px; color: #444; }
.c107 { width: 107px; } .c187 { width: 187px; }
.edit { width: 150px; background: #fff; border-color: #666; padding-left: 4px; letter-spacing: -.4px; }
.off, .off .combo { color: #888; }
.off .c107 { background: #ccc; border-color: #bfbfbf; }
.off .edit { border-color: #ccc; padding: 0 4px 0 2px; }
.off .combo svg { color: #aaa; }
.off em { font-style: normal; background: #f0f0f0; width: 128px; height: 17px; line-height: 18px; padding-left: 2px; }
.formula { width: 380px; height: 281px; margin: 6px 0 0 24px; background: #f0f0f0; border: 1px solid #7a7a7a; }
.dbuttons { display: flex; gap: 8px; margin: 7px 12px 0; }
.dbuttons button { width: 73px; height: 21px; border: 1px solid #adadad; background: #e1e1e1; padding: 1px 3px 0 0; font: inherit; color: #111; }
.dbuttons .reset { margin-right: auto; }
.dbuttons .ok { border: 2px solid #0078d7; }
.dbuttons .apply { background: #ccc; border-color: #bfbfbf; color: #838383; }
```
